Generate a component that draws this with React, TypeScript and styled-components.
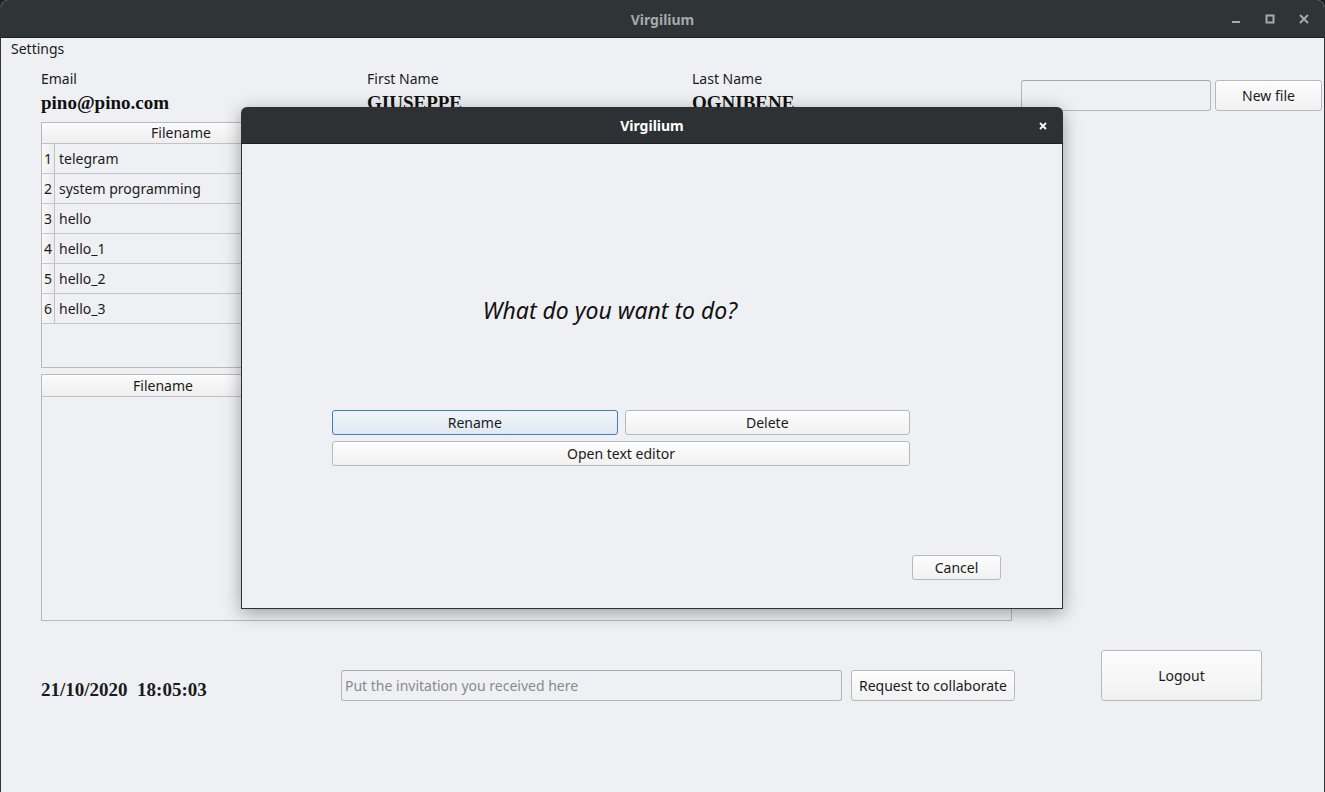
import React from 'react';
import styled, { createGlobalStyle } from 'styled-components';

const GlobalStyle = createGlobalStyle`
  * {
    box-sizing: border-box;
    margin: 0;
    padding: 0;
  }

  body {
    font-family: 'Noto Sans', 'Open Sans', sans-serif;
    background-color: #1e2122;
    color: #1b1b1b;
    overflow: hidden;
  }
`;

const Window = styled.div`
  position: relative;
  width: 1325px;
  height: 792px;
  background: #eff0f3;
  border-radius: 8px 8px 0 0;
  border-left: 1px solid #2f3436;
  border-right: 1px solid #2f3436;
  overflow: hidden;
`;

const TitleBar = styled.div<{ $active?: boolean }>`
  height: ${p => (p.$active ? 37 : 38)}px;
  background: ${p => (p.$active ? '#2d3134' : '#2f3436')};
  border-bottom: 1px solid #1d2021;
  display: flex;
  align-items: center;
  justify-content: center;
  position: relative;
  color: ${p => (p.$active ? '#ffffff' : '#a5a9ab')};
  font-weight: 700;
  font-size: 14px;
  padding-top: 1px;
`;

const WindowControls = styled.div`
  position: absolute;
  right: 12px;
  top: 0;
  height: 38px;
  display: flex;
  align-items: center;
  gap: 18px;
`;

const ControlIcon = styled.svg`
  width: 16px;
  height: 16px;
  display: block;
`;

const MenuBar = styled.div`
  height: 22px;
  line-height: 22px;
  padding-left: 10px;
  font-size: 14px;
`;

const Content = styled.div`
  padding-left: 40px;
`;

const TopArea = styled.div`
  display: flex;
  margin-top: 10px;
`;

const InfoGrid = styled.div`
  display: grid;
  grid-template-columns: 326px 325px 329px;
`;

const Field = styled.div`
  display: flex;
  flex-direction: column;
`;

const Label = styled.div`
  font-size: 14px;
  line-height: 18px;
  height: 18px;
`;

const Value = styled.div`
  font-family: 'Liberation Serif', 'Times New Roman', serif;
  font-weight: 700;
  font-size: 19px;
  line-height: 24px;
  height: 24px;
  margin-top: 3px;
  color: #111;
`;

const NewFileBox = styled.div`
  display: flex;
  gap: 4px;
  margin-top: 10px;
`;

const TextInput = styled.input<{ $w: number }>`
  width: ${p => p.$w}px;
  height: 31px;
  border: 1px solid #b6b6ba;
  border-top-color: #a8a8ac;
  border-radius: 3px;
  background: #eff0f3;
  font-family: 'Noto Sans', sans-serif;
  font-size: 14px;
  padding: 0 3px;
  color: #1b1b1b;
  outline: none;

  &::placeholder {
    color: #8a8a8e;
  }
`;

const Button = styled.button<{ $w?: number; $h?: number; $focused?: boolean }>`
  width: ${p => (p.$w ? `${p.$w}px` : '100%')};
  height: ${p => p.$h ?? 25}px;
  border: 1px solid ${p => (p.$focused ? '#3f7fbf' : '#b9b9bd')};
  border-radius: 3px;
  background: ${p =>
    p.$focused
      ? 'linear-gradient(#f1f5fa, #dfe8f2)'
      : 'linear-gradient(#fdfdfd, #f1f1f2)'};
  font-family: 'Noto Sans', sans-serif;
  font-size: 14px;
  color: #1b1b1b;
  padding: 0;
`;

const Table = styled.div<{ $h: number }>`
  width: 971px;
  height: ${p => p.$h}px;
  border: 1px solid #b9b9bd;
  background: #eff0f3;
  display: flex;
  flex-direction: column;
`;

const HeaderCell = styled.div<{ $h: number }>`
  height: ${p => p.$h}px;
  line-height: ${p => p.$h - 1}px;
  border-bottom: 1px solid #c2c2c6;
  background: linear-gradient(#fbfbfb, #efeff0);
  font-size: 14px;
  display: flex;
`;

const CornerCell = styled.div`
  width: 13px;
`;

const HeaderTitle = styled.div<{ $w: number }>`
  width: ${p => p.$w}px;
  text-align: center;
`;

const Row = styled.div`
  height: 30px;
  display: flex;
  border-bottom: 1px solid #c6c6ca;
  font-size: 14px;
`;

const RowNum = styled.div`
  width: 13px;
  background: linear-gradient(90deg, #f9f9fa, #ececee);
  border-right: 1px solid #c2c2c6;
  display: flex;
  align-items: center;
  justify-content: center;
  font-size: 14px;
`;

const RowText = styled.div`
  flex: 1;
  display: flex;
  align-items: center;
  padding-left: 4px;
  padding-bottom: 1px;
`;

const SecondTable = styled(Table)`
  margin-top: 6px;
`;

const TableGap = styled.div`
  height: 7px;
`;

const BottomArea = styled.div`
  display: flex;
  align-items: flex-end;
  margin-top: 29px;
`;

const DateTime = styled.div`
  font-family: 'Liberation Serif', 'Times New Roman', serif;
  font-weight: 700;
  font-size: 19px;
  width: 300px;
  white-space: pre;
  line-height: 24px;
  margin-bottom: -1px;
`;

const InviteGroup = styled.div`
  display: flex;
  gap: 9px;
  margin-right: 86px;
`;

const Dialog = styled.div`
  position: absolute;
  left: 240px;
  top: 107px;
  width: 822px;
  height: 502px;
  border-radius: 6px 6px 0 0;
  box-shadow: 0 4px 18px rgba(0, 0, 0, 0.35);
  display: flex;
  flex-direction: column;
  overflow: hidden;
`;

const DialogClose = styled.div`
  position: absolute;
  right: 12px;
  top: 0;
  height: 37px;
  display: flex;
  align-items: center;
`;

const DialogBody = styled.div`
  flex: 1;
  background: #eff0f4;
  border: 1px solid #2d3134;
  border-top: none;
  display: flex;
  flex-direction: column;
  padding: 0 152px 28px 90px;
`;

const Question = styled.div`
  font-style: italic;
  font-size: 23px;
  text-align: center;
  margin-top: 150px;
  line-height: 32px;
  padding-right: 22px;
  color: #111;
`;

const ActionGrid = styled.div`
  display: grid;
  grid-template-columns: 1fr 1fr;
  column-gap: 7px;
  row-gap: 6px;
  margin-top: 84px;
`;

const WideCell = styled.div`
  grid-column: 1 / span 2;
`;

const DialogFooter = styled.div`
  margin-top: auto;
  display: flex;
  justify-content: flex-end;
  margin-right: -91px;
`;

const files = ['telegram', 'system programming', 'hello', 'hello_1', 'hello_2', 'hello_3'];

function App() {
  return (
    <>
      <GlobalStyle />
      <Window>
        <TitleBar>
          Virgilium
          <WindowControls>
            <ControlIcon viewBox="0 0 16 16">
              <rect x="4" y="10" width="8" height="2" fill="#a7abad" />
            </ControlIcon>
            <ControlIcon viewBox="0 0 16 16">
              <rect x="4.5" y="4.5" width="7" height="7" fill="none" stroke="#a7abad" strokeWidth="2" />
            </ControlIcon>
            <ControlIcon viewBox="0 0 16 16">
              <path d="M4 4 L12 12 M12 4 L4 12" stroke="#a7abad" strokeWidth="2" />
            </ControlIcon>
          </WindowControls>
        </TitleBar>
        <MenuBar>Settings</MenuBar>
        <Content>
          <TopArea>
            <InfoGrid>
              <Field>
                <Label>Email</Label>
                <Value>pino@pino.com</Value>
              </Field>
              <Field>
                <Label>First Name</Label>
                <Value>GIUSEPPE</Value>
              </Field>
              <Field>
                <Label>Last Name</Label>
                <Value>OGNIBENE</Value>
              </Field>
            </InfoGrid>
            <NewFileBox>
              <TextInput $w={190} />
              <Button $w={107} $h={31}>New file</Button>
            </NewFileBox>
          </TopArea>
          <TableGap />
          <Table $h={246}>
            <HeaderCell $h={21}>
              <CornerCell />
              <HeaderTitle $w={252}>Filename</HeaderTitle>
            </HeaderCell>
            {files.map((f, i) => (
              <Row key={f}>
                <RowNum>{i + 1}</RowNum>
                <RowText>{f}</RowText>
              </Row>
            ))}
          </Table>
          <SecondTable $h={247}>
            <HeaderCell $h={22}>
              <HeaderTitle $w={242}>Filename</HeaderTitle>
            </HeaderCell>
          </SecondTable>
          <BottomArea>
            <DateTime>{'21/10/2020  18:05:03'}</DateTime>
            <InviteGroup>
              <TextInput $w={501} placeholder="Put the invitation you received here" />
              <Button $w={164} $h={31}>Request to collaborate</Button>
            </InviteGroup>
            <Button $w={161} $h={51}>Logout</Button>
          </BottomArea>
        </Content>

        <Dialog>
          <TitleBar $active>
            Virgilium
            <DialogClose>
              <ControlIcon viewBox="0 0 16 16">
                <path d="M5 5 L11 11 M11 5 L5 11" stroke="#ffffff" strokeWidth="1.8" />
              </ControlIcon>
            </DialogClose>
          </TitleBar>
          <DialogBody>
            <Question>What do you want to do?</Question>
            <ActionGrid>
              <Button $focused>Rename</Button>
              <Button>Delete</Button>
              <WideCell>
                <Button>Open text editor</Button>
              </WideCell>
            </ActionGrid>
            <DialogFooter>
              <Button $w={89}>Cancel</Button>
            </DialogFooter>
          </DialogBody>
        </Dialog>
      </Window>
    </>
  );
}

export default App;
